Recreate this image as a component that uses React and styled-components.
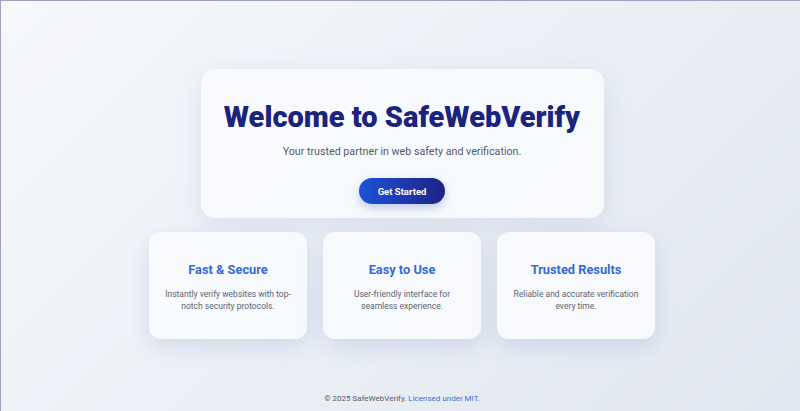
import React from "react";
import styled, { createGlobalStyle } from "styled-components";

const GlobalStyle = createGlobalStyle`
  html, body {
    margin: 0;
    padding: 0;
  }
  body {
    font-family: Roboto, "Liberation Sans", sans-serif;
    background: linear-gradient(135deg, #f6f8fb 0%, #e1e7f0 100%);
    min-height: 100vh;
  }
  * {
    box-sizing: border-box;
  }
`;

const features = [
  {
    title: "Fast & Secure",
    text: "Instantly verify websites with top-notch security protocols.",
  },
  {
    title: "Easy to Use",
    text: "User-friendly interface for seamless experience.",
  },
  {
    title: "Trusted Results",
    text: "Reliable and accurate verification every time.",
  },
];

function App() {
  return (
    <>
      <GlobalStyle />
      <Page>
        <Main>
          <Hero>
            <Title>Welcome to SafeWebVerify</Title>
            <Subtitle>Your trusted partner in web safety and verification.</Subtitle>
            <StartButton>Get Started</StartButton>
          </Hero>
          <FeatureRow>
            {features.map((f) => (
              <FeatureCard key={f.title}>
                <FeatureTitle>{f.title}</FeatureTitle>
                <FeatureText>{f.text}</FeatureText>
              </FeatureCard>
            ))}
          </FeatureRow>
        </Main>
        <Footer>
          © 2025 SafeWebVerify. <FooterLink href="#">Licensed under MIT.</FooterLink>
        </Footer>
      </Page>
    </>
  );
}

const Page = styled.div`
  height: 411px;
  display: flex;
  flex-direction: column;
  border-top: 1px solid #9ea2bd;
  border-left: 1px solid #9ea2bd;
`;

const Main = styled.main`
  flex: 1;
  display: flex;
  flex-direction: column;
  align-items: center;
  padding-top: 68px;
  padding-left: 3px;
`;

const Hero = styled.section`
  width: 403px;
  height: 149px;
  background: rgba(248, 250, 253, 0.95);
  border-radius: 14px;
  box-shadow: 0 8px 28px rgba(40, 70, 150, 0.1);
  display: flex;
  flex-direction: column;
  align-items: center;
  padding-top: 30px;
`;

const Title = styled.h1`
  margin: 0;
  font-size: 29px;
  line-height: 36px;
  font-weight: 900;
  color: #1a237e;
`;

const Subtitle = styled.p`
  margin: 10px 0 0;
  font-size: 10.7px;
  line-height: 14px;
  color: #555b66;
`;

const StartButton = styled.button`
  margin-top: 19px;
  width: 86px;
  height: 26px;
  border: none;
  border-radius: 13px;
  background: linear-gradient(90deg, #1f52d8 0%, #1b2485 100%);
  color: #ffffff;
  font-family: Roboto, "Liberation Sans", sans-serif;
  font-size: 9.5px;
  font-weight: 700;
  box-shadow: 0 4px 10px rgba(31, 60, 180, 0.25);
  cursor: pointer;
`;

const FeatureRow = styled.div`
  display: flex;
  gap: 16px;
  margin-top: 14px;
`;

const FeatureCard = styled.div`
  width: 158px;
  height: 107px;
  background: rgba(248, 250, 253, 0.95);
  border-radius: 12px;
  box-shadow: 0 8px 22px rgba(40, 70, 150, 0.13);
  display: flex;
  flex-direction: column;
  align-items: center;
  padding: 29px 14px 0;
  text-align: center;
`;

const FeatureTitle = styled.h2`
  margin: 0;
  font-size: 12.8px;
  line-height: 17px;
  font-weight: 700;
  color: #356ad8;
`;

const FeatureText = styled.p`
  margin: 10px 0 0;
  font-size: 8.5px;
  line-height: 12px;
  color: #5f6570;
`;

const Footer = styled.footer`
  text-align: center;
  font-size: 8px;
  color: #555b66;
  padding: 0 0 8px 3px;
`;

const FooterLink = styled.a`
  color: #3b6fd8;
  text-decoration: none;
`;

export default App;
